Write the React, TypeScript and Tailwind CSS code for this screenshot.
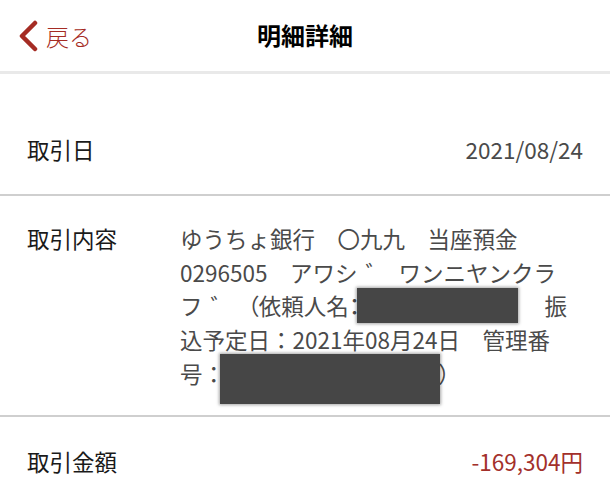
import { ReactNode } from "react";

const font = { fontFamily: '"Noto Sans CJK JP", "Noto Sans", sans-serif' };

function Redacted({ className }: { className: string }) {
  return (
    <span
      className={`absolute bg-[#464646] shadow-[0_0_3px_1px_rgba(0,0,0,0.35)] ${className}`}
      aria-hidden
    />
  );
}

// standalone dakuten drawn a bit to the right, like the source font
function Dakuten() {
  return <span className="relative left-[8px]">゛</span>;
}

function Row({ label, children, className }: { label: string; children: ReactNode; className: string }) {
  return (
    <div className={`flex px-[27px] ${className}`}>
      <div className="w-[153px] shrink-0 text-[22.5px] leading-[33.75px] text-[#1a1a1a]">{label}</div>
      <div className="flex-1 text-[22.5px] leading-[33.75px] text-[#4a4a4a]">{children}</div>
    </div>
  );
}

export default function App() {
  return (
    <div className="h-[498px] w-[610px] overflow-hidden bg-white" style={font}>
      {/* Header */}
      <div className="relative flex h-[74px] items-center justify-center border-b-[3px] border-[#e9e9e9]">
        <button className="absolute left-[17px] top-[19px] flex items-center gap-[7px] text-[23px] text-[#a52c24]">
          <svg width="22" height="32" viewBox="0 0 22 32" fill="none">
            <polyline
              points="18,3 5,16 18,29"
              stroke="#a52c24"
              strokeWidth="4.5"
              strokeLinecap="round"
              strokeLinejoin="round"
            />
          </svg>
          <span className="font-light">戻る</span>
        </button>
        <h1 className="-mt-[2px] text-[24px] font-bold text-black">明細詳細</h1>
      </div>

      <div className="pt-[33px]">
        <Row label="取引日" className="items-center pb-[27px] pt-[26px] border-b-2 border-[#cfcfcf]">
          <div className="text-right">2021/08/24</div>
        </Row>

        <Row label="取引内容" className="pb-[24px] pt-[26px] border-b-2 border-[#cfcfcf]">
          <div className="w-[392px] whitespace-nowrap">
            <div>ゆうちょ銀行　〇九九　当座預金</div>
            <div>
              0296505　アワシ<Dakuten />
              <span className="tracking-[-4px]">　</span>ワンニヤンクラ
            </div>
            <div className="relative flex justify-between">
              <span>
                フ<Dakuten />　<span className="[font-feature-settings:'palt']">（</span>依頼人名
                <span className="[font-feature-settings:'palt']">：</span>
              </span>
              <span className="pr-[5px]">振</span>
              <Redacted className="left-[177px] top-[-1px] h-[35px] w-[161px]" />
            </div>
            <div>込予定日：2021年08月24日　管理番</div>
            <div className="relative">
              <span>号：</span>
              <span className="inline-block w-[213px]" />
              <span>）</span>
              <Redacted className="left-[40px] top-[-3px] h-[50px] w-[220px]" />
            </div>
          </div>
        </Row>

        <Row label="取引金額" className="items-center pt-[28px]">
          <div className="text-right text-[#a3302b]">-169,304円</div>
        </Row>
      </div>
    </div>
  );
}
